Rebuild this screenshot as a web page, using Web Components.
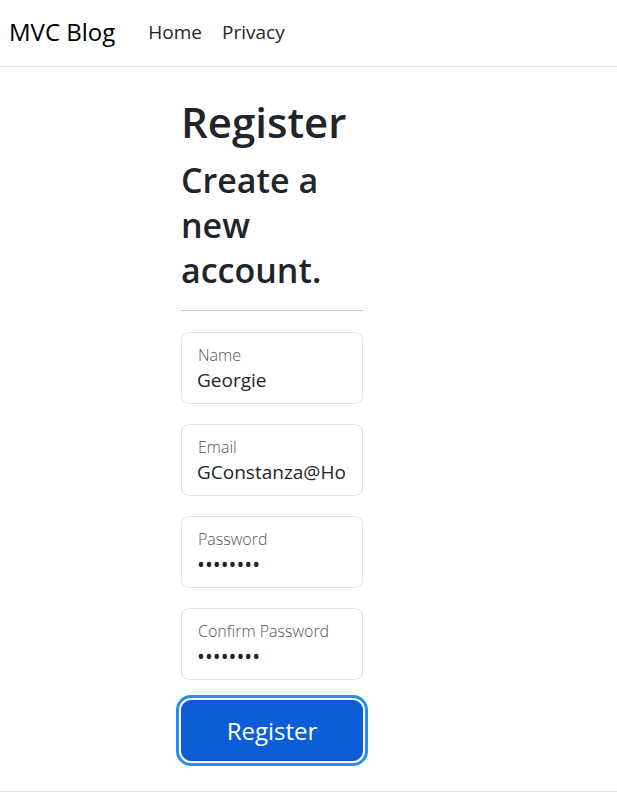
<!DOCTYPE html>
<html lang="en">
<head>
<meta charset="utf-8">
<meta name="viewport" content="width=device-width, initial-scale=1">
<title>Register - MVC Blog</title>
<style>
body { margin: 0; background: #fff; color: #212529; font-family: "Open Sans", "Noto Sans", sans-serif; font-size: 19px; line-height: 30px; }
</style>
</head>
<body>
<blog-page>
  <blog-navbar slot="header" brand="MVC Blog">
    <blog-link href="#home">Home</blog-link>
    <blog-link href="#privacy">Privacy</blog-link>
  </blog-navbar>
  <register-form>
    <span slot="title">Register</span>
    <span slot="subtitle">Create a new account.</span>
    <floating-field label="Name" value="Georgie"></floating-field>
    <floating-field label="Email" type="email" value="GConstanza@Ho"></floating-field>
    <floating-field label="Password" type="password" value="password"></floating-field>
    <floating-field label="Confirm Password" type="password" value="password"></floating-field>
    <primary-button slot="action">Register</primary-button>
  </register-form>
</blog-page>
<script>
class BaseElement extends HTMLElement {
  constructor() {
    super();
    this.attachShadow({ mode: "open" });
  }
  connectedCallback() {
    this.shadowRoot.innerHTML = this.render();
  }
}

customElements.define("blog-page", class extends BaseElement {
  render() {
    return `<style>
      :host { display: block; }
      main { display: grid; grid-template-columns: minmax(0, 181fr) minmax(0, 182fr) minmax(0, 254fr); padding: 28px 0 30px; }
      slot:not([name]) { display: contents; }
      ::slotted(register-form) { grid-column: 2; }
      footer { border-top: 1px solid #dee2e6; }
    </style>
    <slot name="header"></slot><main><slot></slot></main><footer></footer>`;
  }
});

customElements.define("blog-navbar", class extends BaseElement {
  render() {
    return `<style>
      :host { display: block; border-bottom: 1px solid #dee2e6; }
      nav { display: flex; align-items: center; padding: 14px 9px 16px; gap: 33px; }
      .brand { color: #000; font-size: 24px; line-height: 36px; text-decoration: none; white-space: nowrap; }
      .links { display: flex; gap: 20px; }
    </style>
    <nav><a class="brand" href="#home">${this.getAttribute("brand")}</a><div class="links"><slot></slot></div></nav>`;
  }
});

customElements.define("blog-link", class extends BaseElement {
  render() {
    return `<style>
      :host { display: block; }
      a { color: #212529; text-decoration: none; }
    </style>
    <a href="${this.getAttribute("href")}"><slot></slot></a>`;
  }
});

customElements.define("register-form", class extends BaseElement {
  render() {
    return `<style>
      :host { display: block; }
      h1, h2 { margin: 0; font-weight: 600; }
      h1 { font-size: 42px; line-height: 54px; margin-bottom: 9px; }
      h2 { font-size: 34px; line-height: 45px; }
      hr { margin: 17px 0 1px; border: 0; border-top: 1px solid #c8c9ca; }
      form { display: grid; gap: 20px; }
    </style>
    <h1><slot name="title"></slot></h1>
    <form><section><h2><slot name="subtitle"></slot></h2><hr></section><slot></slot><slot name="action"></slot></form>`;
  }
});

customElements.define("floating-field", class extends BaseElement {
  render() {
    const type = this.getAttribute("type") || "text";
    return `<style>
      :host { display: block; }
      .box { display: flex; flex-direction: column; box-sizing: border-box; border: 1px solid #dee2e6; border-radius: 8px; padding: 10px 14px 10px 15px; }
      label { color: #50555a; font-size: 16px; line-height: 24px; font-weight: 300; padding-left: 1px; white-space: nowrap; }
      input { width: 100%; min-width: 0; box-sizing: border-box; margin: 0; padding: 0; border: 0; outline: 0; background: none; color: #212529; font: inherit; height: 26px; }
      input[type="password"] { font-size: 21px; }
    </style>
    <div class="box"><label for="field">${this.getAttribute("label")}</label><input id="field" type="${type}" value="${this.getAttribute("value")}"></div>`;
  }
});

customElements.define("primary-button", class extends BaseElement {
  render() {
    return `<style>
      :host { display: block; }
      button { width: 100%; margin: 0; padding: 11px 20px; border: 1px solid #0a58ca; border-radius: 10px; background: #0b5ed7; color: #fff; font: inherit; font-size: 24px; line-height: 37px; box-shadow: 0 0 0 2px #fff, 0 0 0 5px #258cfb; }
    </style>
    <button type="button"><slot></slot></button>`;
  }
});
</script>
</body>
</html>
